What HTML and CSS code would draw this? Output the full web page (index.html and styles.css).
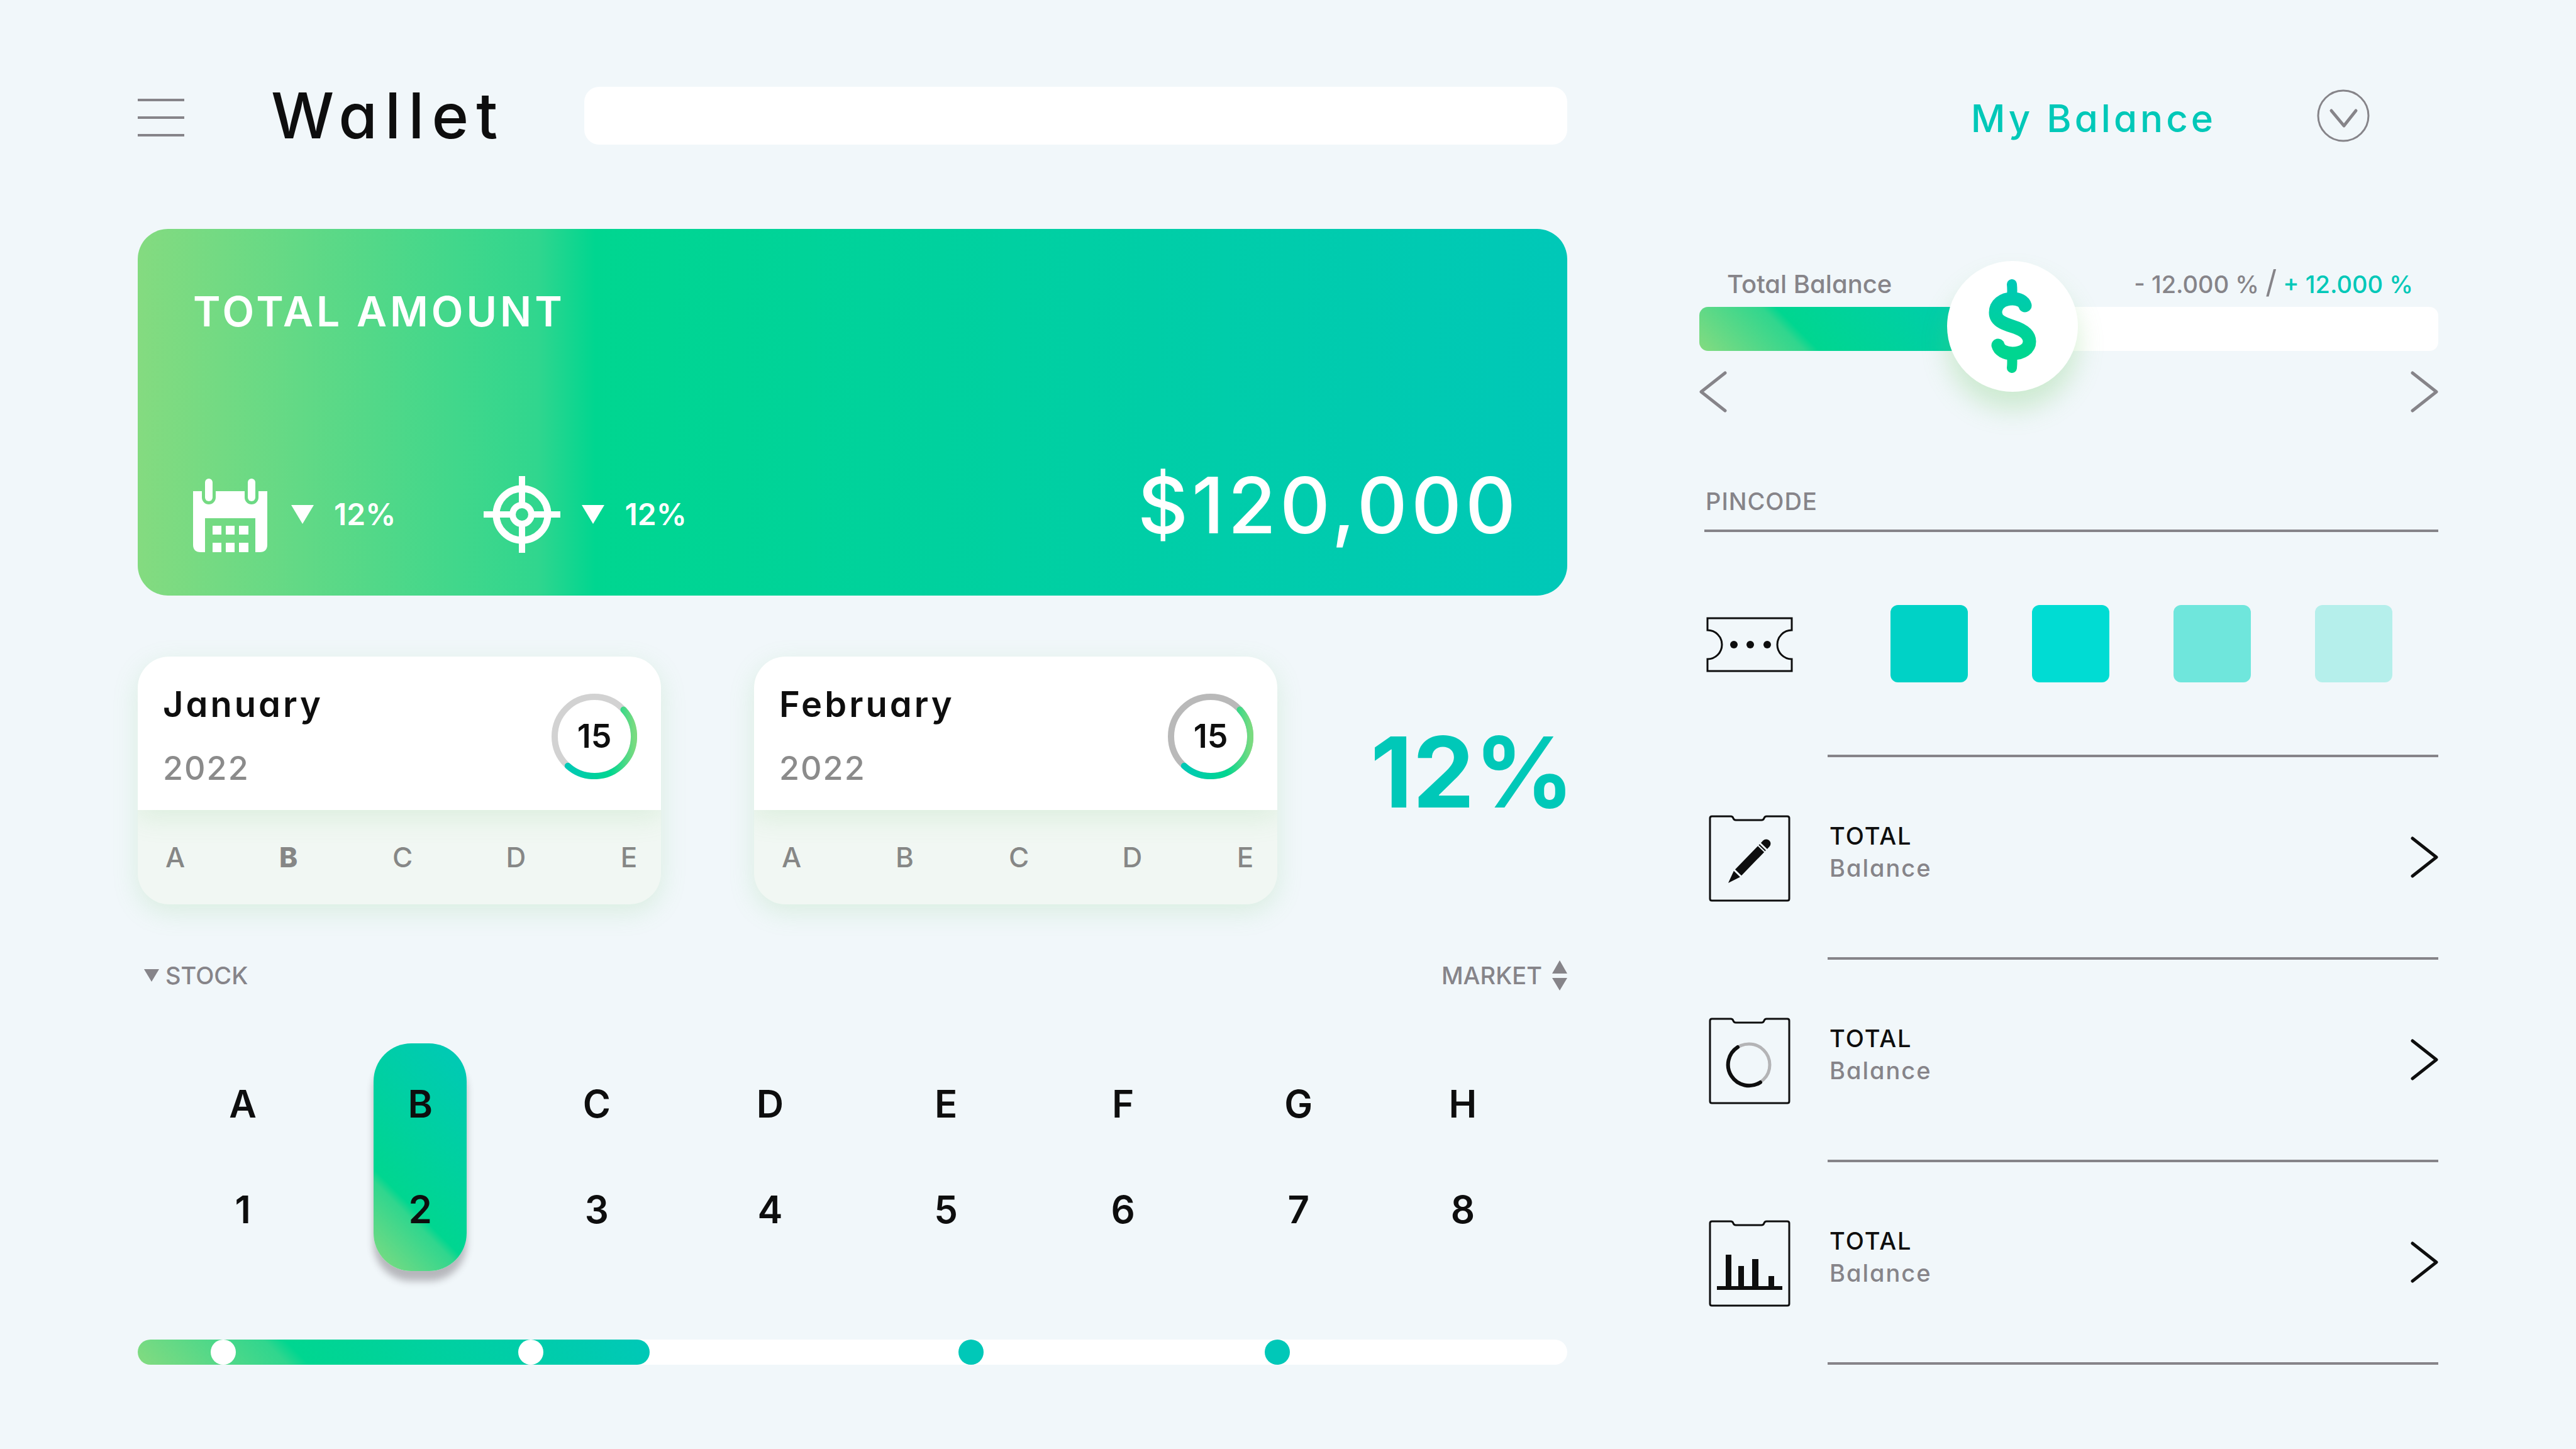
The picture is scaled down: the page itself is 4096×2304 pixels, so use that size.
FILE: index.html
```html
<!DOCTYPE html>
<html lang="en">
<head>
<meta charset="utf-8">
<meta name="viewport" content="width=device-width, initial-scale=1">
<title>Wallet</title>
<link rel="stylesheet" href="styles.css">
</head>
<body>
<svg class="defs" aria-hidden="true">
  <defs>
    <linearGradient id="ring-gradient" gradientUnits="userSpaceOnUse" x1="132" y1="0" x2="20" y2="0">
      <stop offset="0" stop-color="#7adb80"/>
      <stop offset="0.34" stop-color="#00d690"/>
      <stop offset="1" stop-color="#00c8b8"/>
    </linearGradient>
    <linearGradient id="dollar-gradient" gradientUnits="userSpaceOnUse" x1="0" y1="149" x2="0" y2="0">
      <stop offset="0" stop-color="#00d690"/>
      <stop offset="0.25" stop-color="#00d690"/>
      <stop offset="1" stop-color="#00c8b8"/>
    </linearGradient>
    <symbol id="chevron" viewBox="0 0 44 66">
      <path d="M3 3 41 33 3 63" fill="none" stroke="currentColor" stroke-linecap="round" stroke-linejoin="round"/>
    </symbol>
    <symbol id="sheet" viewBox="0 0 130 138">
      <path d="M5 2H35Q38 2 39 5Q40 8 43 8H84Q87 8 88 5Q89 2 92 2H125Q128 2 128 5V133Q128 136 125 136H5Q2 136 2 133V5Q2 2 5 2Z" fill="none" stroke="currentColor" stroke-width="3"/>
    </symbol>
  </defs>
</svg>

<div class="page">
  <main class="wallet">
    <header class="topbar">
      <button class="menu" type="button" aria-label="Menu"><span></span><span></span><span></span></button>
      <h1 class="title">Wallet</h1>
      <input class="search" type="search" aria-label="Search">
    </header>

    <section class="total">
      <h2 class="total-label">TOTAL AMOUNT</h2>
      <div class="total-row">
        <div class="stats">
          <div class="stat">
            <svg class="stat-icon" viewBox="0 0 122 122" aria-hidden="true">
              <g transform="translate(0 4)" fill="#fff">
                <path fill-rule="evenodd" d="M0 20H14V30A11 11 0 0 0 36 30V20H82V30A11 11 0 0 0 104 30V20H118V105Q118 117 106 117H99V63H19V117H12Q0 117 0 105Z"/>
                <rect x="19" y="0" width="12" height="36" rx="6"/>
                <rect x="87" y="0" width="12" height="36" rx="6"/>
                <path d="M31 75h14v14H31zM52 75h14v14H52zM73 75h15v14H73zM31 102h14v15H31zM52 102h14v15H52zM73 102h15v15H73z"/>
              </g>
            </svg>
            <svg class="stat-arrow" viewBox="0 0 36 30" aria-hidden="true"><path d="M0 0H36L18 30Z" fill="#fff"/></svg>
            <span class="stat-value">12%</span>
          </div>
          <div class="stat">
            <svg class="stat-icon" viewBox="0 0 122 122" aria-hidden="true">
              <g fill="none" stroke="#fff" stroke-width="11">
                <circle cx="61" cy="61" r="41"/>
                <circle cx="61" cy="61" r="15" stroke-width="10"/>
                <path d="M61 0V42M61 80V122M0 61H42M80 61H122" stroke-width="10"/>
              </g>
            </svg>
            <svg class="stat-arrow" viewBox="0 0 36 30" aria-hidden="true"><path d="M0 0H36L18 30Z" fill="#fff"/></svg>
            <span class="stat-value">12%</span>
          </div>
        </div>
        <strong class="amount">$120,000</strong>
      </div>
    </section>

    <section class="months">
      <article class="month">
        <div class="month-head">
          <div>
            <h3 class="month-name">January</h3>
            <p class="month-year">2022</p>
          </div>
          <div class="ring">
            <svg viewBox="0 0 136 136" aria-hidden="true">
              <circle cx="68" cy="68" r="63" fill="none" stroke="#d2d2d2" stroke-width="10"/>
              <path d="M114.5 25.5A63 63 0 0 1 25.8 114.8" fill="none" stroke="url(#ring-gradient)" stroke-width="10" stroke-linecap="round"/>
            </svg>
            <span class="ring-value">15</span>
          </div>
        </div>
        <div class="month-tabs">
          <button type="button">A</button><button type="button" class="active">B</button><button type="button">C</button><button type="button">D</button><button type="button">E</button>
        </div>
      </article>
      <article class="month">
        <div class="month-head">
          <div>
            <h3 class="month-name">February</h3>
            <p class="month-year">2022</p>
          </div>
          <div class="ring">
            <svg viewBox="0 0 136 136" aria-hidden="true">
              <circle cx="68" cy="68" r="63" fill="none" stroke="#b9b9b9" stroke-width="10"/>
              <path d="M114.5 25.5A63 63 0 0 1 25.8 114.8" fill="none" stroke="url(#ring-gradient)" stroke-width="10" stroke-linecap="round"/>
            </svg>
            <span class="ring-value">15</span>
          </div>
        </div>
        <div class="month-tabs">
          <button type="button">A</button><button type="button">B</button><button type="button">C</button><button type="button">D</button><button type="button">E</button>
        </div>
      </article>
      <strong class="percent">12%</strong>
    </section>

    <div class="filters">
      <button type="button" class="filter filter-stock">
        <svg class="stock-arrow" viewBox="0 0 24 20" aria-hidden="true"><path d="M0 0H24L12 20Z" fill="currentColor"/></svg>STOCK
      </button>
      <button type="button" class="filter filter-market">MARKET
        <svg class="market-arrow" viewBox="0 0 24 48" aria-hidden="true"><path d="M0 21H24L12 0ZM0 28H24L12 48Z" fill="currentColor"/></svg>
      </button>
    </div>

    <div class="picks">
      <button type="button"><span>A</span><span>1</span></button>
      <button type="button" class="active"><span>B</span><span>2</span></button>
      <button type="button"><span>C</span><span>3</span></button>
      <button type="button"><span>D</span><span>4</span></button>
      <button type="button"><span>E</span><span>5</span></button>
      <button type="button"><span>F</span><span>6</span></button>
      <button type="button"><span>G</span><span>7</span></button>
      <button type="button"><span>H</span><span>8</span></button>
    </div>

    <div class="timeline">
      <div class="timeline-fill" style="width: 35.8%"></div>
      <span class="stop" style="left: 6%"></span>
      <span class="stop" style="left: 27.5%"></span>
      <span class="stop ahead" style="left: 58.3%"></span>
      <span class="stop ahead" style="left: 79.7%"></span>
    </div>
  </main>

  <aside class="balance">
    <header class="balance-top">
      <h2 class="balance-title">My Balance</h2>
      <button class="expand" type="button" aria-label="Expand">
        <svg viewBox="0 0 84 84" aria-hidden="true">
          <g fill="none" stroke="currentColor">
            <circle cx="42" cy="42" r="40" stroke-width="3"/>
            <path d="M23 34 43 58 62 34" stroke-width="5" stroke-linecap="round" stroke-linejoin="round"/>
          </g>
        </svg>
      </button>
    </header>

    <div class="slider-labels">
      <label class="slider-name" for="balance-range">Total Balance</label>
      <span class="change">- 12.000 % <span class="slash">/</span> <span class="gain">+ 12.000 %</span></span>
    </div>
    <div class="slider">
      <input id="balance-range" type="range" min="0" max="1000" value="407">
      <svg class="dollar" viewBox="0 0 76 149" aria-hidden="true">
        <g fill="none" stroke="url(#dollar-gradient)" stroke-linecap="round">
          <path d="M58 42C56 35 48 31 38 31C22 31 11 40 11 53C11 65 22 70 38 75C54 80 65 87 65 99C65 110 54 118 38 118C26 118 17 113 15 105" stroke-width="21"/>
          <path d="M37 8Q38 18 37 28M37 121Q38 131 37 141" stroke-width="16"/>
        </g>
      </svg>
    </div>
    <div class="slider-nav">
      <button type="button" aria-label="Previous"><svg class="chevron back" aria-hidden="true"><use href="#chevron"/></svg></button>
      <button type="button" aria-label="Next"><svg class="chevron" aria-hidden="true"><use href="#chevron"/></svg></button>
    </div>

    <h3 class="pin-label" id="pin-label">PINCODE</h3>
    <div class="row">
      <svg class="ticket" viewBox="0 0 138 88" aria-hidden="true">
        <path d="M2 2H136V21A23 23 0 0 0 136 67V86H2V67A23 23 0 0 0 2 21Z" fill="none" stroke="currentColor" stroke-width="3"/>
        <g fill="currentColor"><circle cx="44" cy="44" r="6"/><circle cx="70" cy="44" r="6"/><circle cx="97" cy="44" r="6"/></g>
      </svg>
      <div class="row-body pins" role="group" aria-labelledby="pin-label">
        <input class="pin pin-1" type="password" maxlength="1" aria-label="Digit 1">
        <input class="pin pin-2" type="password" maxlength="1" aria-label="Digit 2">
        <input class="pin pin-3" type="password" maxlength="1" aria-label="Digit 3">
        <input class="pin pin-4" type="password" maxlength="1" aria-label="Digit 4">
      </div>
    </div>

    <a class="row" href="#edit">
      <svg class="sheet" viewBox="0 0 130 138" aria-hidden="true">
        <use href="#sheet"/>
        <g transform="translate(31 108) rotate(-46)" fill="currentColor">
          <path d="M0 0 20 -7V7ZM23 -7H75V7H23ZM77 -7H79V7H77ZM82 -7H87A7 7 0 0 1 87 7H82Z"/>
        </g>
      </svg>
      <span class="row-body">
        <span class="row-text"><span class="row-title">TOTAL</span><span class="row-sub">Balance</span></span>
        <svg class="chevron" aria-hidden="true"><use href="#chevron"/></svg>
      </span>
    </a>
    <a class="row" href="#progress">
      <svg class="sheet" viewBox="0 0 130 138" aria-hidden="true">
        <use href="#sheet"/>
        <circle cx="64" cy="75" r="33" fill="none" stroke="#b4b4b6" stroke-width="5"/>
        <path d="M46 47A33 33 0 0 0 82 103" fill="none" stroke="currentColor" stroke-width="6" stroke-linecap="round"/>
      </svg>
      <span class="row-body">
        <span class="row-text"><span class="row-title">TOTAL</span><span class="row-sub">Balance</span></span>
        <svg class="chevron" aria-hidden="true"><use href="#chevron"/></svg>
      </span>
    </a>
    <a class="row" href="#report">
      <svg class="sheet" viewBox="0 0 130 138" aria-hidden="true">
        <use href="#sheet"/>
        <path d="M13 105H27V55H36V105H47V73H56V105H69V62H79V105H95V89H104V105H117V111H13Z" fill="currentColor"/>
      </svg>
      <span class="row-body">
        <span class="row-text"><span class="row-title">TOTAL</span><span class="row-sub">Balance</span></span>
        <svg class="chevron" aria-hidden="true"><use href="#chevron"/></svg>
      </span>
    </a>
  </aside>
</div>
</body>
</html>
```

FILE: styles.css
```css
:root {
  --bg: #f1f7fa;
  --ink: #0e0e0e;
  --muted: #868489;
  --teal: #00c8b8;
  --green: #00d690;
  --lime: #84db80;
  --sweep: var(--lime) 0%, #30d68e 28%, var(--green) 32%, var(--teal) 100%;
}

* {
  box-sizing: border-box;
  margin: 0;
}

body {
  background: var(--bg);
  color: var(--ink);
  font-family: Inter, "Open Sans", sans-serif;
  font-feature-settings: "cv11";
  font-weight: 500;
}

button,
input {
  padding: 0;
  border: 0;
  background: none;
  color: inherit;
  font: inherit;
  font-feature-settings: inherit;
  letter-spacing: inherit;
  appearance: none;
}

svg {
  display: block;
  flex: none;
}

.defs {
  position: absolute;
  width: 0;
  height: 0;
}

.page {
  display: grid;
  grid-template-columns: 2273fr 1175fr;
  column-gap: 210px;
  min-height: 100vh;
  padding: 138px 219px 133px;
}

/* Header */

.topbar {
  display: flex;
  align-items: center;
  height: 92px;
}

.menu {
  display: grid;
  gap: 24px;
  width: 74px;
  padding-top: 6px;
}

.menu span {
  height: 4px;
  background: var(--muted);
}

.title {
  width: 498px;
  margin-left: 138px;
  font-size: 100px;
  font-weight: 500;
  line-height: 92px;
  letter-spacing: 12px;
}

.search {
  flex: 1;
  height: 92px;
  padding: 0 32px;
  border-radius: 24px;
  background: #fff;
  font-size: 44px;
}

/* Total card */

.total {
  display: flex;
  flex-direction: column;
  justify-content: space-between;
  min-height: 583px;
  margin-top: 134px;
  padding: 98px 76px 68px 88px;
  border-radius: 48px;
  background: linear-gradient(90deg, var(--sweep));
  color: #fff;
}

.total-label {
  font-size: 66px;
  font-weight: 600;
  line-height: 66px;
  letter-spacing: 5px;
}

.total-row {
  display: flex;
  align-items: flex-start;
  justify-content: space-between;
}

.stats {
  display: flex;
  gap: 140px;
}

.stat {
  display: flex;
  align-items: center;
}

.stat-icon {
  width: 122px;
  height: 122px;
}

.stat-arrow {
  width: 36px;
  height: 30px;
  margin: 0 32px 0 34px;
}

.stat-value {
  font-size: 48px;
  font-weight: 600;
  line-height: 64px;
}

.amount {
  font-size: 124px;
  font-weight: 500;
  line-height: 92px;
  letter-spacing: 6px;
}

/* Months */

.months {
  display: grid;
  grid-template-columns: 832fr 832fr minmax(0, 313fr);
  column-gap: 148px;
  align-items: center;
  margin-top: 97px;
}

.month {
  overflow: hidden;
  border-radius: 50px;
  background: #f1f7f3;
  box-shadow: 0 12px 40px rgba(110, 200, 110, 0.18);
}

.month-head {
  display: flex;
  align-items: center;
  justify-content: space-between;
  height: 244px;
  padding: 10px 38px 0 40px;
  background: #fff;
  box-shadow: 0 12px 40px rgba(110, 200, 110, 0.16);
}

.month-name {
  font-size: 56px;
  font-weight: 600;
  line-height: 64px;
  letter-spacing: 4px;
}

.month-year {
  margin-top: 38px;
  color: #8b8b8b;
  font-size: 52px;
  line-height: 64px;
  letter-spacing: 2px;
}

.ring {
  display: grid;
  place-items: center;
}

.ring > * {
  grid-area: 1 / 1;
}

.ring svg {
  width: 136px;
  height: 136px;
}

.ring-value {
  font-size: 52px;
  font-weight: 600;
  line-height: 64px;
}

.month-tabs {
  display: flex;
  align-items: center;
  justify-content: space-between;
  height: 150px;
  padding: 0 36px 0 44px;
  color: #868786;
  font-size: 44px;
}

.month-tabs button {
  width: 30px;
  white-space: nowrap;
}

.month-tabs .active {
  font-weight: 800;
}

.percent {
  padding-bottom: 26px;
  color: var(--teal);
  font-size: 156px;
  font-weight: 700;
  line-height: 120px;
}

/* Filters */

.filters {
  display: flex;
  justify-content: space-between;
  margin-top: 89px;
  color: var(--muted);
}

.filter {
  display: flex;
  align-items: center;
  gap: 10px;
  font-size: 38px;
  line-height: 48px;
}

.filter-stock {
  padding-left: 10px;
}

.filter-market {
  gap: 16px;
}

.stock-arrow {
  width: 24px;
  height: 20px;
}

.market-arrow {
  width: 24px;
  height: 48px;
}

/* Letter and number columns */

.picks {
  display: grid;
  grid-template-columns: 282fr 282fr 279fr 272fr 287fr 276fr 282fr 240fr;
  justify-items: center;
  margin-top: 84px;
  padding: 0 46px 0 26px;
}

.picks button {
  display: grid;
  align-content: start;
  gap: 104px;
  width: 148px;
  height: 362px;
  padding-top: 64px;
  border-radius: 60px;
  font-size: 60px;
  font-weight: 600;
  line-height: 64px;
  text-align: center;
}

.picks .active {
  background: linear-gradient(45deg, var(--sweep));
  box-shadow: 0 16px 12px rgba(60, 50, 60, 0.32);
}

/* Timeline */

.timeline {
  position: relative;
  height: 40px;
  margin-top: 109px;
  border-radius: 20px;
  background: #fff;
}

.timeline-fill {
  height: 40px;
  border-radius: 20px;
  background: linear-gradient(45deg, var(--sweep));
}

.stop {
  position: absolute;
  top: 0;
  width: 40px;
  height: 40px;
  margin-left: -20px;
  border-radius: 50%;
  background: #fff;
}

.stop.ahead {
  background: var(--teal);
}

/* Balance column */

.balance-top {
  display: flex;
  align-items: center;
  justify-content: flex-end;
  gap: 160px;
  height: 92px;
  padding-right: 109px;
}

.balance-title {
  padding-top: 8px;
  color: var(--teal);
  font-size: 60px;
  font-weight: 500;
  line-height: 64px;
  letter-spacing: 5px;
}

.expand {
  color: var(--muted);
}

.expand svg {
  width: 84px;
  height: 84px;
}

.slider-labels {
  display: flex;
  justify-content: space-between;
  height: 44px;
  margin-top: 200px;
  padding: 0 40px 0 44px;
  color: var(--muted);
  font-size: 38px;
  line-height: 44px;
}

.slider-name {
  font-size: 40px;
}

.change {
  white-space: nowrap;
}

.slash {
  font-size: 50px;
  font-weight: 400;
  line-height: 0;
}

.gain {
  color: var(--teal);
}

.slider {
  position: relative;
  height: 70px;
  margin-top: 14px;
}

.slider input {
  display: block;
  width: 100%;
  height: 70px;
  border-radius: 14px;
  background: linear-gradient(45deg, var(--sweep)) 0 0 / 45% 100% no-repeat #fff;
}

.slider input::-webkit-slider-thumb {
  width: 208px;
  height: 208px;
  margin-top: -8px;
  border-radius: 50%;
  background: #fff;
  box-shadow: 0 28px 40px rgba(110, 200, 100, 0.28);
  appearance: none;
}

.dollar {
  position: absolute;
  top: -44px;
  left: calc(104px + (100% - 208px) * 0.407 - 38px);
  width: 76px;
  height: 149px;
  pointer-events: none;
}

.slider-nav {
  display: flex;
  justify-content: space-between;
  margin-top: 32px;
  color: var(--muted);
}

.chevron {
  width: 44px;
  height: 66px;
  stroke-width: 5px;
}

.back {
  transform: scaleX(-1);
}

.pin-label {
  margin: 119px 0 0 8px;
  padding: 0 0 23px 2px;
  border-bottom: 4px solid var(--muted);
  color: var(--muted);
  font-size: 38px;
  font-weight: 500;
  line-height: 44px;
  letter-spacing: 1px;
}

.row {
  display: grid;
  grid-template-columns: 160px 1fr;
  column-gap: 44px;
  align-items: center;
  justify-items: center;
  color: inherit;
  text-decoration: none;
}

.row-body {
  display: flex;
  align-items: center;
  justify-content: space-between;
  justify-self: stretch;
  height: 322px;
  padding-left: 3px;
  border-bottom: 4px solid var(--muted);
}

.pins {
  justify-content: flex-start;
  gap: 102px;
  height: 358px;
  padding-left: 100px;
}

.ticket {
  width: 138px;
  height: 88px;
}

.sheet {
  width: 130px;
  height: 138px;
}

.pin {
  width: 123px;
  height: 123px;
  border-radius: 12px;
  font-size: 60px;
  text-align: center;
}

.pin-1 {
  background: #00d2c6;
}

.pin-2 {
  background: #00dcd3;
}

.pin-3 {
  background: #6fe6dc;
}

.pin-4 {
  background: #b5efeb;
}

.row-text {
  display: grid;
  padding-bottom: 16px;
  font-size: 38px;
  line-height: 51px;
  letter-spacing: 2px;
}

.row-sub {
  color: var(--muted);
}
```
